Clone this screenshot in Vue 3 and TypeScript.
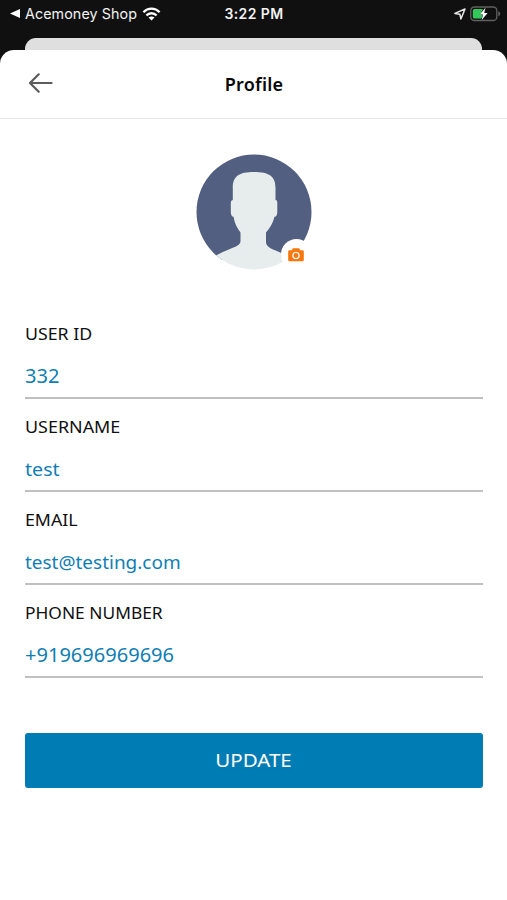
<script setup lang="ts">
import { ref } from 'vue'

interface Field {
  key: string
  label: string
  value: string
}

const fields = ref<Field[]>([
  { key: 'user-id', label: 'USER ID', value: '332' },
  { key: 'username', label: 'USERNAME', value: 'test' },
  { key: 'email', label: 'EMAIL', value: 'test@testing.com' },
  { key: 'phone', label: 'PHONE NUMBER', value: '+919696969696' },
])
</script>

<template>
  <div class="screen">
    <div class="status">
      <div class="status-left">
        <svg class="back-app" viewBox="0 0 10 9"><path d="M0 4.5 10 0V9Z" fill="#fff" /></svg>
        <span class="app-name">Acemoney Shop</span>
        <svg class="wifi" viewBox="0 0 18 14" fill="none" stroke="#fff" stroke-width="2.3">
          <path d="M.9 5.2C5.5.5 12.5.5 17.1 5.2" />
          <path d="M3.9 8.4C6.8 5.5 11.2 5.5 14.1 8.4" />
          <path d="M9 13.6 6 10.6C7.7 9 10.3 9 12 10.6Z" fill="#fff" stroke="none" />
        </svg>
      </div>
      <span class="clock">3:22 PM</span>
      <div class="status-right">
        <svg class="location" viewBox="0 0 12 12">
          <path d="M.9 5.4 11 1 6.9 11 5.9 6.2Z" fill="none" stroke="#e8e8e8" stroke-width="1.5" stroke-linejoin="round" />
        </svg>
        <svg class="battery" viewBox="0 0 31 16">
          <rect x=".8" y="1" width="26" height="13.5" rx="3.6" fill="none" stroke="#606060" stroke-width="1.3" />
          <path d="M4.5 3H13L9.8 9H12.5L11.5 12.6H4.5Q2.8 12.6 2.8 11V4.6Q2.8 3 4.5 3Z" fill="#32c95a" />
          <path d="M28.3 5.2Q30.3 6 30.3 7.8T28.3 10.4Z" fill="#606060" />
          <path d="M15.5 1.7 9.7 8.4H13L11.7 14.1 17.6 7H14.2Z" fill="#fff" />
        </svg>
      </div>
    </div>
    <div class="sheet-behind"></div>
    <main class="sheet">
      <header class="header">
        <button class="back" aria-label="Back">
          <svg viewBox="0 0 26 20" fill="none" stroke="#5c5c5c" stroke-width="2.2" stroke-linecap="round" stroke-linejoin="round">
            <path d="M23.6 10H2M10.7 1.3 2 10l8.7 8.7" />
          </svg>
        </button>
        <h1 class="title">Profile</h1>
      </header>
      <div class="avatar">
        <svg class="portrait" viewBox="0 0 116 116">
          <defs><clipPath id="portrait-circle"><circle cx="58" cy="58" r="57.5" /></clipPath></defs>
          <g clip-path="url(#portrait-circle)">
            <path d="M0 0H116V90L95 106H20L0 104Z" fill="#535f80" />
            <path d="M36.8 46V34C36.8 22 43 18 58 18S79.5 22 79.5 34V46Q81.5 46 81.3 49V58Q81.2 62.5 78.5 62.8C77 69 74 74 70 78.5V88C70 93 76 95 82 97.5Q93 102 100 109V117H15L20 101.5Q26 98 34 95C40 92.5 44.5 91 44.5 87V78.5C41 74 38.5 69 37.5 62.8Q35 62.5 34.8 58V49Q34.6 46 36.8 46Z" fill="#e7eced" />
          </g>
        </svg>
        <button class="camera" aria-label="Change photo">
          <svg viewBox="0 0 16 14">
            <path d="M1.5 2.2H4.2V1.2Q4.2.2 5.2.2H10.8Q11.8.2 11.8 1.2V2.2H14.5Q15.8 2.2 15.8 3.5V12Q15.8 13.2 14.5 13.2H1.5Q.2 13.2.2 12V3.5Q.2 2.2 1.5 2.2Z" fill="#f8760c" />
            <circle cx="8" cy="7.5" r="3.1" fill="none" stroke="#fff0e4" stroke-width="1.4" />
          </svg>
        </button>
      </div>
      <form class="form" @submit.prevent>
        <div v-for="field in fields" :key="field.key" class="field">
          <div class="label" :class="field.key"><span>{{ field.label }}</span></div>
          <div class="value" :class="field.key"><span>{{ field.value }}</span></div>
        </div>
        <button class="update" type="submit"><span>UPDATE</span></button>
      </form>
    </main>
  </div>
</template>

<style>
body {
  background: #fff;
}
</style>

<style scoped>
.screen {
  box-sizing: border-box;
  height: 900px;
  overflow: hidden;
  background: linear-gradient(#101010 0 70px, #fff 70px);
  font-family: "Noto Sans", sans-serif;
}
button {
  padding: 0;
  border: 0;
  background: none;
}
svg {
  display: block;
}
.status {
  display: grid;
  grid-template-columns: 1fr auto 1fr;
  align-items: center;
  height: 27px;
  padding: 0 6px 0 10px;
  margin-bottom: 11px;
  color: #f2f2f2;
  font-family: Inter, sans-serif;
}
.status-left,
.status-right {
  display: flex;
  align-items: center;
}
.back-app {
  width: 10px;
  height: 9px;
  margin-right: 5px;
}
.app-name {
  font-size: 14.3px;
  letter-spacing: 0.08px;
  white-space: nowrap;
}
.wifi {
  width: 19px;
  height: 14px;
  margin-left: 5px;
}
.clock {
  margin-right: 3px;
  font-size: 14px;
  font-weight: 600;
  letter-spacing: 0.4px;
}
.status-right {
  justify-content: flex-end;
}
.location {
  width: 12px;
  height: 12px;
  margin-right: 4px;
}
.battery {
  width: 31px;
  height: 16px;
}
.sheet-behind {
  height: 12px;
  margin: 0 25px;
  border-radius: 11px 11px 0 0;
  background: #dfdfdf;
}
.sheet {
  height: 850px;
  border-radius: 14px 14px 0 0;
  background: #fff;
}
.header {
  box-sizing: border-box;
  display: grid;
  grid-template-columns: 1fr auto 1fr;
  align-items: center;
  height: 69px;
  padding: 0 28px;
  border-bottom: 1px solid #e6e6e6;
}
.back svg {
  width: 26px;
  height: 20px;
  margin-bottom: 2px;
}
.title {
  margin: 0 0 0 1px;
  color: #080808;
  font-size: 18px;
  font-weight: 600;
  letter-spacing: 0.2px;
  line-height: 28px;
}
.avatar {
  position: relative;
  width: 116px;
  height: 116px;
  margin: 35px auto 52px;
}
.camera {
  position: absolute;
  right: 0;
  bottom: 0;
  display: flex;
  align-items: center;
  justify-content: center;
  width: 31px;
  height: 31px;
  border-radius: 50%;
  background: #fff;
}
.camera svg {
  width: 16px;
  height: 14px;
}
.form {
  padding: 0 24.5px 0 25px;
}
.field {
  box-sizing: border-box;
  height: 93px;
  padding-top: 1px;
}
.label span,
.value span,
.update span {
  display: inline-block;
  transform: scaleX(var(--stretch, 1));
  transform-origin: left;
}
.label {
  --stretch: 1.11;
  height: 34px;
  color: #101010;
  font-size: 16px;
  line-height: 22px;
}
.label.username {
  --stretch: 1.12;
}
.label.phone {
  --stretch: 1.085;
}
.value {
  --stretch: 1.025;
  box-sizing: border-box;
  height: 42px;
  border-bottom: 2px solid #c0c0c0;
  color: #0f7eb4;
  font-size: 18.5px;
  line-height: 38px;
}
.value.username {
  --stretch: 1.06;
}
.value.user-id,
.value.phone {
  --stretch: 1.055;
  font-size: 19px;
}
.update {
  --stretch: 1.11;
  display: block;
  width: 100%;
  height: 55px;
  margin-top: 38.6px;
  border-radius: 3px;
  background: #007cb4;
  color: #fff;
  font-family: inherit;
  font-size: 18.5px;
  line-height: 54px;
}
.update span {
  transform-origin: center;
}
</style>
